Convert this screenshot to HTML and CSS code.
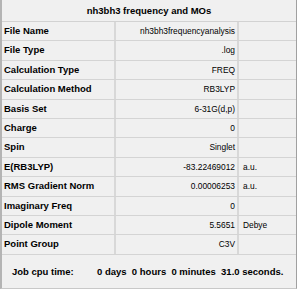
FILE: index.html
```html
<!DOCTYPE html>
<html>
<head>
    <title>nh3bh3 frequency and MOs</title>
    <link rel="stylesheet" href="styles.css">
</head>
<body>
    <div class="panel">
        <div class="title">nh3bh3 frequency and MOs</div>
        <div class="table">
            <div class="row"><div class="label">File Name</div><div class="value">nh3bh3frequencyanalysis</div><div class="unit"></div></div>
            <div class="row"><div class="label">File Type</div><div class="value">.log</div><div class="unit"></div></div>
            <div class="row"><div class="label">Calculation Type</div><div class="value">FREQ</div><div class="unit"></div></div>
            <div class="row"><div class="label">Calculation Method</div><div class="value">RB3LYP</div><div class="unit"></div></div>
            <div class="row"><div class="label">Basis Set</div><div class="value">6-31G(d,p)</div><div class="unit"></div></div>
            <div class="row"><div class="label">Charge</div><div class="value">0</div><div class="unit"></div></div>
            <div class="row"><div class="label">Spin</div><div class="value">Singlet</div><div class="unit"></div></div>
            <div class="row"><div class="label">E(RB3LYP)</div><div class="value">-83.22469012</div><div class="unit">a.u.</div></div>
            <div class="row"><div class="label">RMS Gradient Norm</div><div class="value">0.00006253</div><div class="unit">a.u.</div></div>
            <div class="row"><div class="label">Imaginary Freq</div><div class="value">0</div><div class="unit"></div></div>
            <div class="row"><div class="label">Dipole Moment</div><div class="value">5.5651</div><div class="unit">Debye</div></div>
            <div class="row"><div class="label">Point Group</div><div class="value">C3V</div><div class="unit"></div></div>
        </div>
        <div class="footer">
            <span class="job-label">Job cpu time:</span>
            <span class="job-time">0 days  0 hours  0 minutes  31.0 seconds.</span>
        </div>
    </div>
</body>
</html>
```

FILE: styles.css
```css
body {
    margin: 0;
    background: #ffffff;
    font-family: "Liberation Sans", Arial, sans-serif;
    color: #000000;
}

.panel {
    width: 294px;
    height: 288px;
    background: #f0f0f0;
    border-left: 2px solid #b4b4b4;
    border-right: 1px solid #a0a0a0;
    border-bottom: 1px solid #c8c8c8;
    display: flex;
    flex-direction: column;
}

.title {
    height: 21px;
    line-height: 21px;
    text-align: center;
    font-size: 9.5px;
    font-weight: bold;
    border-bottom: 1px solid #d2d2d2;
}

.row {
    display: grid;
    grid-template-columns: 114px 123px 1fr;
    height: 18.4px;
    border-bottom: 1px solid #d4d4d4;
}

.row > div {
    line-height: 18px;
    white-space: nowrap;
    overflow: hidden;
}

.label {
    font-size: 9.5px;
    font-weight: bold;
    padding-left: 2px;
    border-right: 2px solid #d8d8d8;
}

.value {
    font-size: 8.4px;
    text-align: right;
    padding-right: 2px;
    border-right: 2px solid #d8d8d8;
}

.unit {
    font-size: 8.4px;
    padding-left: 4px;
}

.footer {
    flex: 1;
    display: flex;
    align-items: center;
    padding-left: 10px;
    font-size: 9.5px;
    font-weight: bold;
}

.job-label {
    width: 85px;
}

.job-time {
    white-space: pre;
}
```
